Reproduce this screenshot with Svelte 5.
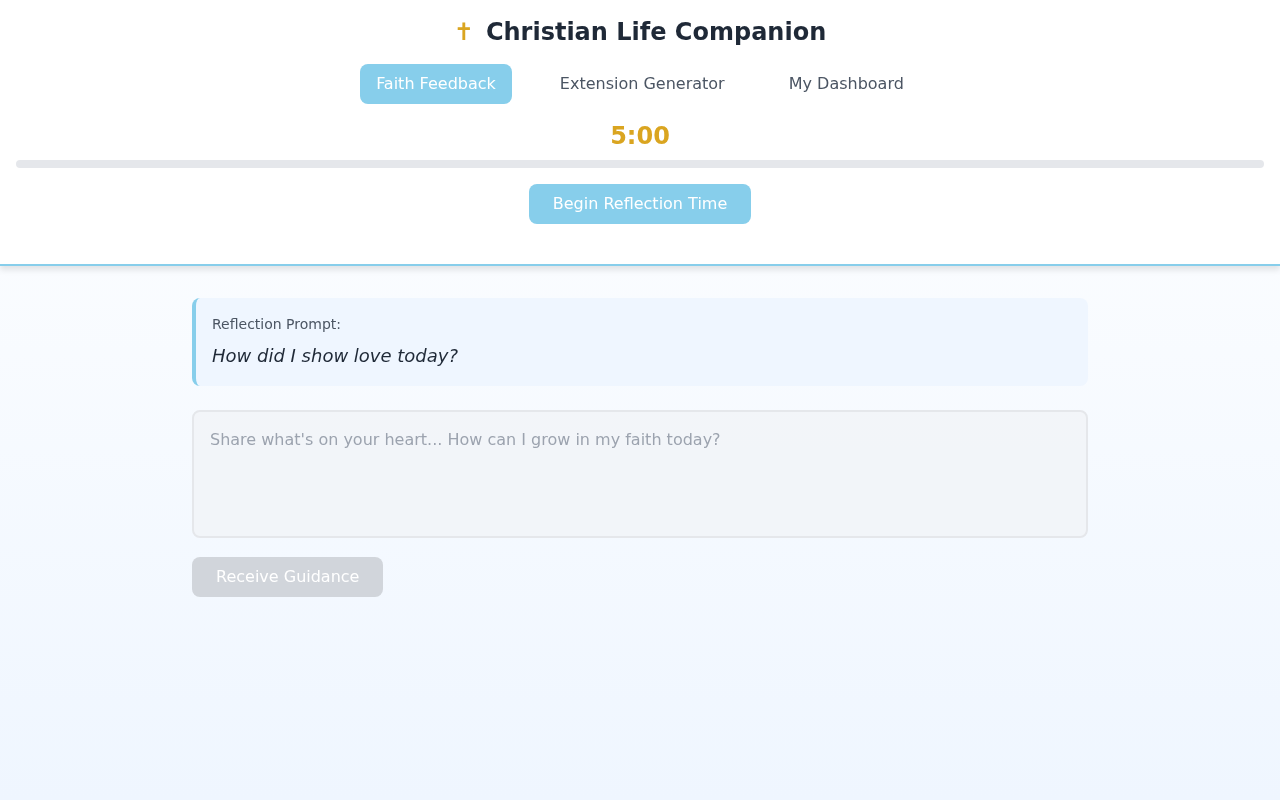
<script>
  const tabs = ["Faith Feedback", "Extension Generator", "My Dashboard"];
  let active = $state("Faith Feedback");
  let seconds = $state(300);
  let reflection = $state("");
  const timeLeft = $derived(`${Math.floor(seconds / 60)}:${String(seconds % 60).padStart(2, "0")}`);
</script>

<div class="page">
  <header class="header">
    <h1 class="title"><span class="cross">✝</span>Christian Life Companion</h1>
    <nav class="tabs">
      {#each tabs as tab}
        <button class="tab" class:active={active === tab} onclick={() => (active = tab)}>{tab}</button>
      {/each}
    </nav>
    <div class="timer">{timeLeft}</div>
    <div class="progress"></div>
    <button class="primary begin">Begin Reflection Time</button>
  </header>

  <main class="content">
    <section class="prompt">
      <p class="prompt-label">Reflection Prompt:</p>
      <p class="prompt-text">How did I show love today?</p>
    </section>
    <textarea
      class="entry"
      disabled
      placeholder="Share what's on your heart... How can I grow in my faith today?"
      bind:value={reflection}
    ></textarea>
    <button class="primary submit" disabled>Receive Guidance</button>
  </main>
</div>

<style>
  :global(body) {
    min-height: 800px;
    font-family: "DejaVu Sans", sans-serif;
    background: linear-gradient(to bottom, #ffffff, #eff6ff);
  }

  .page {
    will-change: transform;
    min-height: 800px;
  }

  .header {
    display: flex;
    flex-direction: column;
    align-items: center;
    height: 266px;
    box-sizing: border-box;
    padding: 16px;
    background: #ffffff;
    border-bottom: 2px solid #87ceeb;
    box-shadow: 0 4px 6px rgba(0, 0, 0, 0.1);
  }

  .title {
    margin: 0 0 16px;
    font-size: 24px;
    line-height: 32px;
    font-weight: 700;
    color: #1f2937;
  }

  .cross {
    margin-right: 12px;
    color: #daa520;
  }

  .tabs {
    display: flex;
    gap: 32px;
    margin-bottom: 16px;
  }

  button {
    font-family: inherit;
    font-size: 16px;
    line-height: 24px;
    border: none;
    border-radius: 8px;
  }

  .tab {
    padding: 8px 16px;
    background: transparent;
    color: #4b5563;
  }

  .tab.active {
    background: #87ceeb;
    color: #ffffff;
  }

  .timer {
    margin-bottom: 8px;
    font-size: 24px;
    line-height: 32px;
    font-weight: 700;
    color: #daa520;
  }

  .progress {
    align-self: stretch;
    height: 8px;
    margin-bottom: 16px;
    border-radius: 4px;
    background: #e5e7eb;
  }

  .primary {
    padding: 8px 24px;
    background: #87ceeb;
    color: #ffffff;
  }

  .content {
    display: flex;
    flex-direction: column;
    align-items: flex-start;
    width: 896px;
    margin: 0 auto;
    padding-top: 32px;
  }

  .prompt {
    align-self: stretch;
    height: 88px;
    box-sizing: border-box;
    margin-bottom: 24px;
    padding: 16px;
    background: #eff6ff;
    border-left: 4px solid #87ceeb;
    border-radius: 8px;
  }

  .prompt-label {
    margin: 0 0 8px;
    font-size: 14px;
    line-height: 20px;
    color: #4b5563;
  }

  .prompt-text {
    margin: 0;
    font-family: Verdana, "DejaVu Sans", sans-serif;
    font-size: 18px;
    line-height: 28px;
    font-style: italic;
    color: #1f2937;
  }

  .entry {
    align-self: stretch;
    height: 128px;
    box-sizing: border-box;
    margin-bottom: 19px;
    padding: 16px;
    font-family: inherit;
    font-size: 16px;
    line-height: 24px;
    background: rgba(241, 244, 247, 0.8);
    border: 2px solid #e5e7eb;
    border-radius: 8px;
    resize: none;
  }

  .entry::placeholder {
    color: #9ca3af;
    opacity: 1;
  }

  .submit:disabled {
    background: #d1d5db;
  }
</style>
